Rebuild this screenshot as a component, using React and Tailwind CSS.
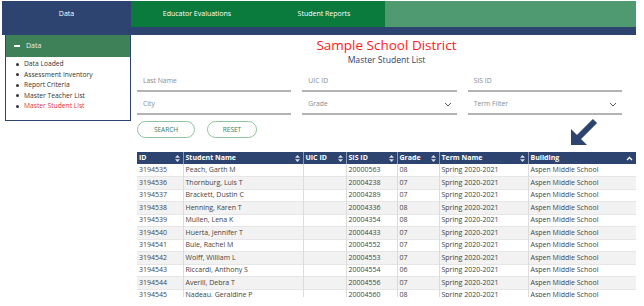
import React from 'react'

const rows = [
  ['3194535', 'Peach, Garth M', '20000563', '08'],
  ['3194536', 'Thornburg, Luis T', '20004238', '07'],
  ['3194537', 'Brackett, Dustin C', '20004289', '07'],
  ['3194538', 'Henning, Karen T', '20004336', '08'],
  ['3194539', 'Mullen, Lena K', '20004354', '08'],
  ['3194540', 'Huerta, Jennifer T', '20004433', '07'],
  ['3194541', 'Buie, Rachel M', '20004552', '07'],
  ['3194542', 'Wolff, William L', '20004553', '07'],
  ['3194543', 'Riccardi, Anthony S', '20004554', '06'],
  ['3194544', 'Averill, Debra T', '20004556', '07'],
  ['3194545', 'Nadeau, Geraldine P', '20004560', '08'],
]

const columns = [
  { name: 'ID', w: 'w-[46px]' },
  { name: 'Student Name', w: 'w-[120px]' },
  { name: 'UIC ID', w: 'w-[43px]' },
  { name: 'SIS ID', w: 'w-[51px]' },
  { name: 'Grade', w: 'w-[42px]' },
  { name: 'Term Name', w: 'w-[89px]' },
  { name: 'Building', w: 'w-[108px]', up: true },
]

const menu = [
  'Data Loaded',
  'Assessment Inventory',
  'Report Criteria',
  'Master Teacher List',
  'Master Student List',
]

function SortIcon() {
  return (
    <svg width="5" height="7" viewBox="0 0 5 7" className="shrink-0">
      <path d="M2.5 0 L5 2.8 L0 2.8 Z M2.5 7 L5 4.2 L0 4.2 Z" fill="#d9dee8" />
    </svg>
  )
}

function UpIcon() {
  return (
    <svg width="7" height="5" viewBox="0 0 7 5" className="shrink-0">
      <path d="M1 4 L3.5 1.5 L6 4" stroke="#ffffff" strokeWidth="1.3" fill="none" />
    </svg>
  )
}

function Chevron() {
  return (
    <svg width="8" height="5" viewBox="0 0 8 5">
      <path d="M1 1 L4 4 L7 1" stroke="#555" strokeWidth="1" fill="none" />
    </svg>
  )
}

function Field({ label, select }) {
  return (
    <div className="flex h-[23px] items-center justify-between border-b-2 border-[#b3b3b3] pl-[6px] pr-[5px] pt-[3px] text-[6.8px] text-[#8a8a8a]">
      <span>{label}</span>
      {select && <Chevron />}
    </div>
  )
}

export default function App() {
  return (
    <div
      className="h-[306px] w-[644px] overflow-hidden bg-white pl-[2px] pr-[8px] pt-[1px]"
      style={{ fontFamily: '"Open Sans", "Liberation Sans", sans-serif' }}
    >
      <div className="flex h-[26px] text-[7px] text-white">
        <div className="flex w-[129px] items-center justify-center bg-[#2d4470]">Data</div>
        <div className="flex w-[132px] items-center justify-center bg-[#0a7b3c]">
          Educator Evaluations
        </div>
        <div className="flex w-[122px] items-center justify-center bg-[#0a7b3c]">
          Student Reports
        </div>
        <div className="flex-1 bg-[#4f9a70]" />
      </div>
      <div className="h-[8px] bg-[#2d4470]" />

      <div className="flex">
        <div className="ml-[3px] w-[126px] shrink-0 self-start border border-t-0 border-[#2d4470]">
          <div className="flex h-[22px] items-center gap-[6px] bg-[#3e8159] pl-[8px] text-[7px] text-[#e6f0ea]">
            <span className="h-[1.5px] w-[6px] bg-white" />
            <span>Data</span>
          </div>
          <ul className="pb-[8px] pl-[10px] pt-[2px] text-[6.7px] leading-[10.5px] text-[#333]">
            {menu.map((item, i) => (
              <li key={item} className="flex items-center gap-[5px]">
                <span className="h-[3px] w-[3px] rounded-full bg-[#333]" />
                <span className={i === 4 ? 'text-[#d9343c]' : ''}>{item}</span>
              </li>
            ))}
          </ul>
        </div>

        <div className="relative min-w-0 flex-1 pl-[6px] pt-[1px]">
          <div className="text-center text-[13.5px] leading-[18px] text-[#ff1a1a]">
            Sample School District
          </div>
          <div className="text-center text-[8.6px] leading-[12px] text-[#2d4470]">
            Master Student List
          </div>

          <div className="mt-[3px] grid w-[485px] grid-cols-3 gap-x-[11px]">
            <Field label="Last Name" />
            <Field label="UIC ID" />
            <Field label="SIS ID" />
            <Field label="City" />
            <Field label="Grade" select />
            <Field label="Term Filter" select />
          </div>

          <div className="mt-[6px] flex gap-[12px]">
            <button className="flex h-[17px] w-[58px] items-center justify-center rounded-full border border-[#8fc39f] text-[6.5px] text-[#3d7a55]">
              SEARCH
            </button>
            <button className="flex h-[17px] w-[50px] items-center justify-center rounded-full border border-[#8fc39f] text-[6.5px] text-[#3d7a55]">
              RESET
            </button>
          </div>

          <svg
            width="30"
            height="30"
            viewBox="0 0 30 30"
            className="absolute left-[438px] top-[81px]"
          >
            <polygon points="2,29 2,13 18,29" fill="#2d4470" />
            <line x1="8" y1="23" x2="26" y2="5" stroke="#2d4470" strokeWidth="6" />
          </svg>

          <div className="mt-[14px] h-[145px] overflow-hidden">
            <table className="w-[499px] table-fixed border-collapse text-[7px]">
              <thead>
                <tr className="h-[12px] bg-[#2d4470] text-white">
                  {columns.map((c) => (
                    <th
                      key={c.name}
                      className={`${c.w} border-r border-[#8c9ab5] p-0 text-left font-bold last:border-r-0`}
                    >
                      <div className="flex items-center justify-between pl-[2px] pr-[3px]">
                        <span>{c.name}</span>
                        {c.up ? <UpIcon /> : <SortIcon />}
                      </div>
                    </th>
                  ))}
                </tr>
              </thead>
              <tbody className="text-[#444]">
                {rows.map((r, i) => (
                  <tr
                    key={r[0]}
                    className={`h-[12.5px] border-b border-[#e6e6e6] ${i % 2 ? 'bg-[#f2f2f2]' : 'bg-white'}`}
                  >
                    <td className="border-r border-[#dcdcdc] p-0 pl-[2px]">{r[0]}</td>
                    <td className="border-r border-[#dcdcdc] p-0 pl-[2px]">{r[1]}</td>
                    <td className="border-r border-[#dcdcdc] p-0 pl-[2px]"></td>
                    <td className="border-r border-[#dcdcdc] p-0 pl-[2px]">{r[2]}</td>
                    <td className="border-r border-[#dcdcdc] p-0 pl-[2px]">{r[3]}</td>
                    <td className="border-r border-[#dcdcdc] p-0 pl-[2px]">Spring 2020-2021</td>
                    <td className="border-r border-[#dcdcdc] p-0 pl-[2px]">Aspen Middle School</td>
                  </tr>
                ))}
              </tbody>
            </table>
          </div>
        </div>
      </div>
    </div>
  )
}
